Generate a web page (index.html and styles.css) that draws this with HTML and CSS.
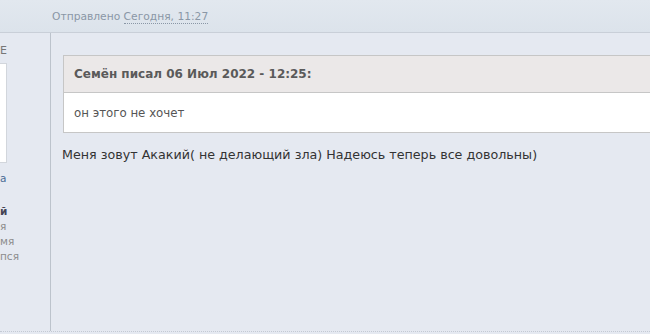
FILE: index.html
```html
<!DOCTYPE html>
<html lang="ru">
  <head>
    <meta charset="UTF-8" />
    <title>Сообщение</title>
    <link rel="stylesheet" href="styles.css">
  </head>
  <body>
    <div class="post-head">
      <span class="posted">Отправлено <abbr class="date">Сегодня, 11:27</abbr></span>
    </div>
    <div class="post">
      <div class="author">
        <p class="author-name">E</p>
        <div class="avatar"></div>
        <p class="author-link">а</p>
        <p class="author-group">й</p>
        <p class="author-info">я</p>
        <p class="author-info">мя</p>
        <p class="author-info">пся</p>
      </div>
      <div class="post-body">
        <div class="quote">
          <div class="quote-title">Семён писал 06 Июл 2022 - 12:25:</div>
          <div class="quote-text">он этого не хочет</div>
        </div>
        <p class="message">Меня зовут Акакий( не делающий зла) Надеюсь теперь все довольны)</p>
      </div>
    </div>
  </body>
</html>
```

FILE: styles.css
```css
* {
  box-sizing: border-box;
  margin: 0;
  padding: 0;
}

body {
  font-family: "DejaVu Sans", Verdana, sans-serif;
  background-color: #e5e9f1;
  height: 334px;
  overflow: hidden;
}

.post-head {
  height: 33px;
  background: linear-gradient(#e2e8ef, #dce3eb);
  border-bottom: 1px solid #c9cfd8;
  padding: 0 0 0 52px;
  display: flex;
  align-items: center;
}

.posted {
  font-size: 10.7px;
  color: #8a97a6;
}

.date {
  text-decoration: none;
  border-bottom: 1px dotted #8a97a6;
}

.post {
  display: flex;
  height: 299px;
  border-bottom: 1px dotted #c4cad4;
}

.author {
  width: 51px;
  flex-shrink: 0;
  border-right: 1px solid #bcc3cc;
  font-size: 10.5px;
  line-height: 13px;
  color: #8c8c8c;
  overflow: hidden;
}

.author-name {
  margin-top: 11px;
  font-size: 11px;
  color: #777;
}

.avatar {
  width: 7px;
  height: 100px;
  margin-top: 6px;
  background-color: #fff;
  border: 1px solid #d2d6dc;
  border-left: none;
}

.author-link {
  margin-top: 9px;
  color: #4b6d95;
}

.author-group {
  margin-top: 20px;
  color: #445;
  font-weight: bold;
}

.author-info {
  margin-top: 2px;
}

.post-body {
  flex: 1;
  padding: 22px 0 0 12px;
}

.quote {
  border: 1px solid #c6c6c6;
  border-right: none;
  background-color: #fff;
}

.quote-title {
  height: 37px;
  display: flex;
  align-items: center;
  padding-left: 10px;
  background-color: #ebe8e8;
  border-bottom: 1px solid #c6c6c6;
  font-size: 12px;
  font-weight: bold;
  color: #5a5a5a;
}

.quote-text {
  height: 39px;
  display: flex;
  align-items: center;
  padding-left: 10px;
  font-size: 11.8px;
  color: #555;
}

.message {
  margin-top: 14px;
  margin-left: -1px;
  font-size: 12.7px;
  color: #333;
}
```
